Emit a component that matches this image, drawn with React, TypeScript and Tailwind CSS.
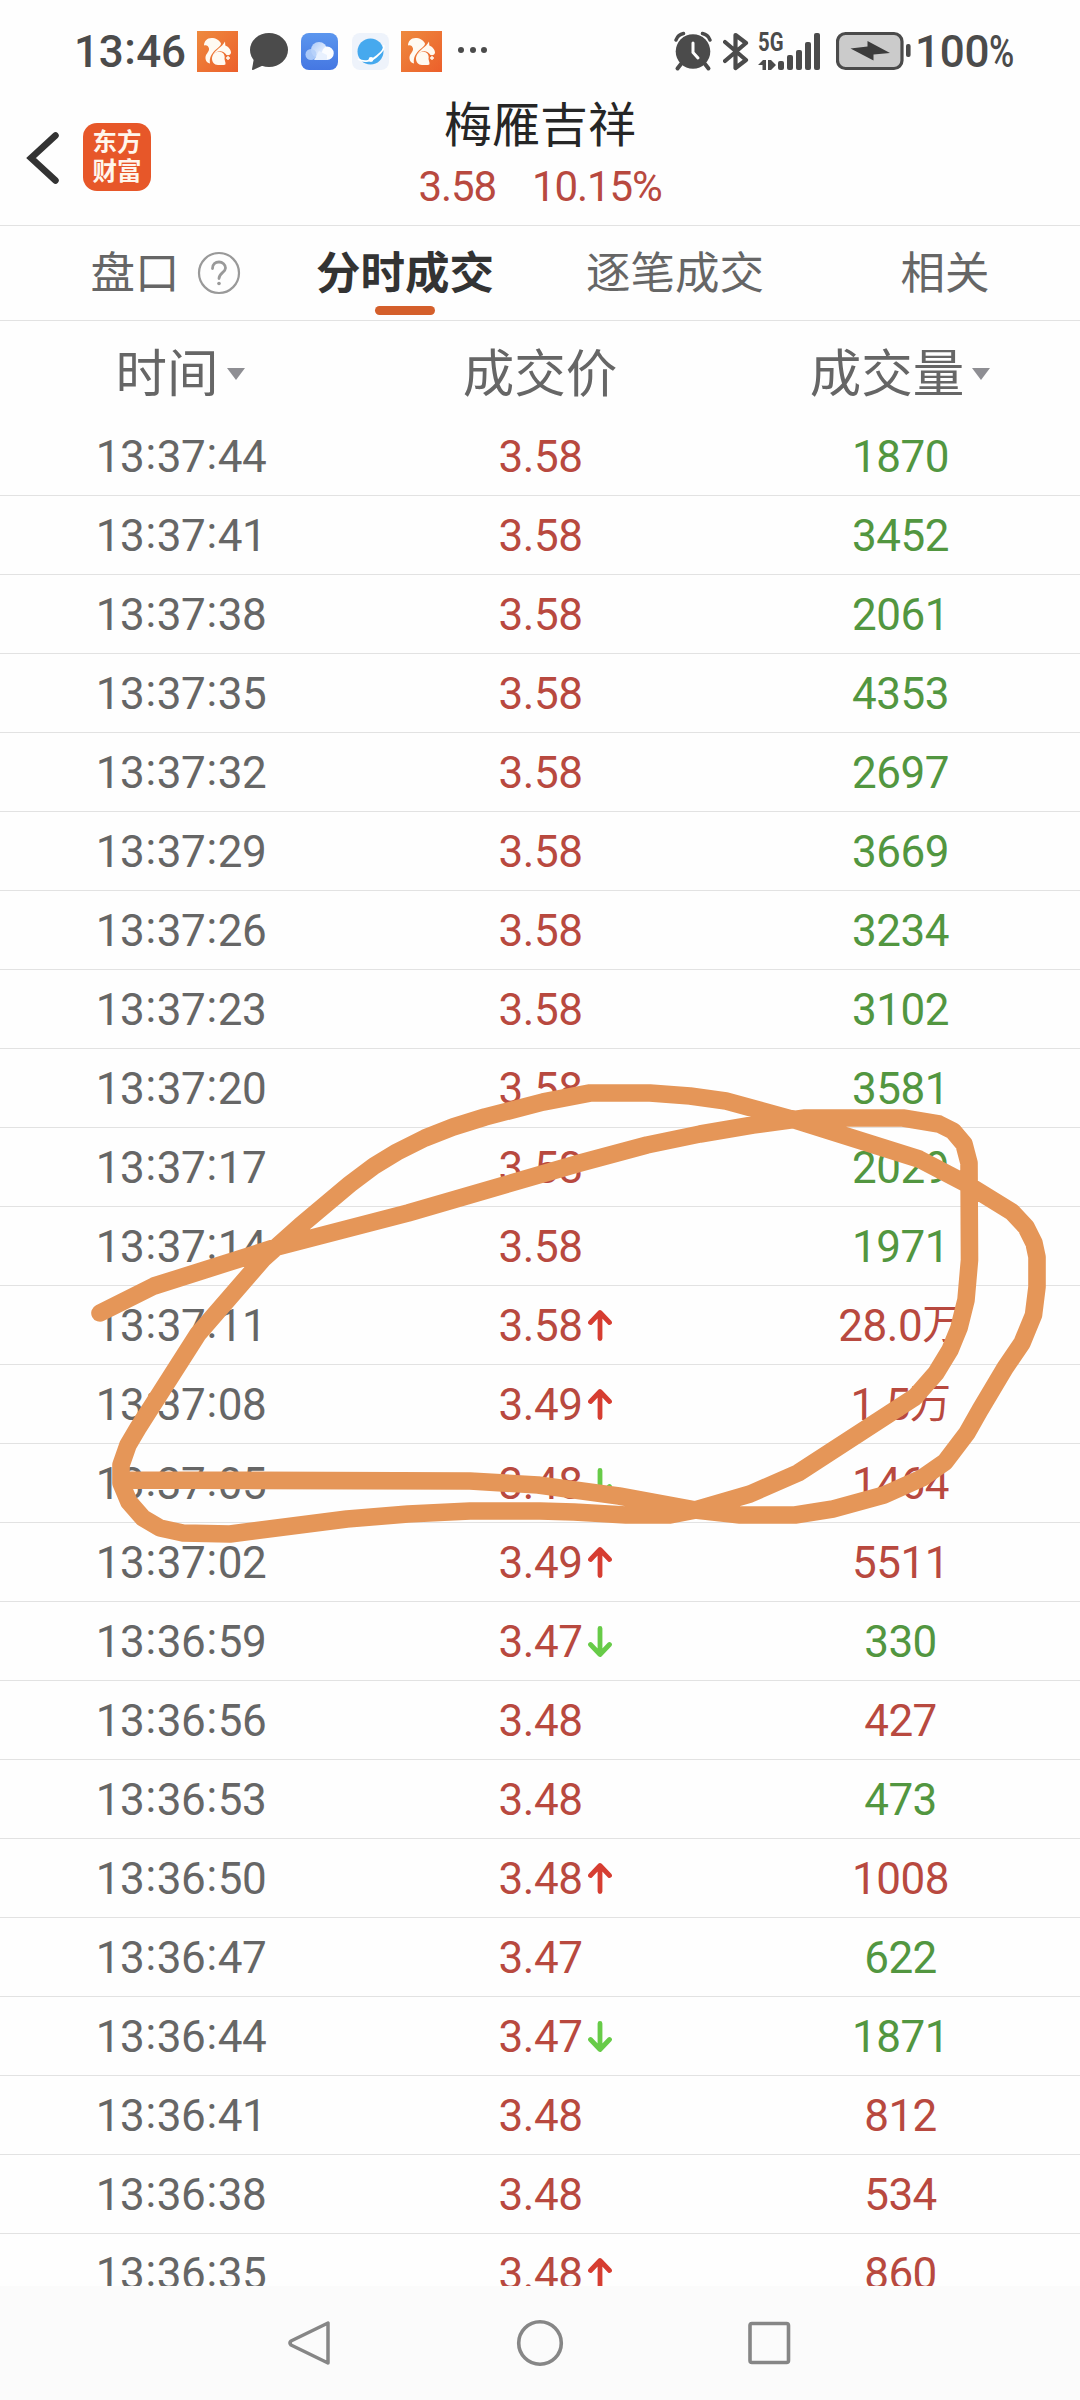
import React from "react";

type Trade = {
  time: string;
  price: string;
  volume: string;
  side: "buy" | "sell";
  move?: "up" | "down";
};

const trades: Trade[] = [
  { time: "13:37:44", price: "3.58", volume: "1870", side: "sell" },
  { time: "13:37:41", price: "3.58", volume: "3452", side: "sell" },
  { time: "13:37:38", price: "3.58", volume: "2061", side: "sell" },
  { time: "13:37:35", price: "3.58", volume: "4353", side: "sell" },
  { time: "13:37:32", price: "3.58", volume: "2697", side: "sell" },
  { time: "13:37:29", price: "3.58", volume: "3669", side: "sell" },
  { time: "13:37:26", price: "3.58", volume: "3234", side: "sell" },
  { time: "13:37:23", price: "3.58", volume: "3102", side: "sell" },
  { time: "13:37:20", price: "3.58", volume: "3581", side: "sell" },
  { time: "13:37:17", price: "3.58", volume: "2029", side: "sell" },
  { time: "13:37:14", price: "3.58", volume: "1971", side: "sell" },
  { time: "13:37:11", price: "3.58", volume: "28.0万", side: "buy", move: "up" },
  { time: "13:37:08", price: "3.49", volume: "1.5万", side: "buy", move: "up" },
  { time: "13:37:05", price: "3.48", volume: "1464", side: "buy", move: "down" },
  { time: "13:37:02", price: "3.49", volume: "5511", side: "buy", move: "up" },
  { time: "13:36:59", price: "3.47", volume: "330", side: "sell", move: "down" },
  { time: "13:36:56", price: "3.48", volume: "427", side: "buy" },
  { time: "13:36:53", price: "3.48", volume: "473", side: "sell" },
  { time: "13:36:50", price: "3.48", volume: "1008", side: "buy", move: "up" },
  { time: "13:36:47", price: "3.47", volume: "622", side: "sell" },
  { time: "13:36:44", price: "3.47", volume: "1871", side: "sell", move: "down" },
  { time: "13:36:41", price: "3.48", volume: "812", side: "buy" },
  { time: "13:36:38", price: "3.48", volume: "534", side: "buy" },
  { time: "13:36:35", price: "3.48", volume: "860", side: "buy", move: "up" },
];

// finger-drawn marker, one continuous stroke
const stroke =
  "100,1313 154,1286 277,1247 408,1213 580,1163 647,1145 700,1134 753,1125 805,1118 903,1118 939,1124 953,1131 964,1144 969,1163 969.5,1260 966,1300 959,1328 950,1350 936,1373 915,1397 798,1473 750,1494 695,1510 669,1515 626,1515 574,1512 540,1511 470,1511 408,1514 347,1519 230,1534 183,1533 160,1528 143,1518 129,1502 121,1483 121,1465 128,1445 138,1428 198,1334 263,1259 300,1226 350,1184 374,1166 397,1152 425,1138 453,1127 485,1117 543,1102 590,1093 650,1093 690,1096 726,1101 795,1120 919,1159 965,1183 1012,1212 1026,1227 1034,1243 1037,1257 1037,1287 1033.5,1315 1022,1343 1005,1368 980,1410 967,1433 945,1462 922,1478 884,1495 833,1509 795,1515 740,1515 695,1510 619,1496 538,1485 470,1481 127,1480";

function UcIcon() {
  return (
    <svg width="41" height="41" viewBox="0 0 41 41">
      <defs>
        <linearGradient id="uc" x1="0" y1="0" x2="1" y2="1">
          <stop offset="0" stopColor="#ee8a3e" />
          <stop offset="1" stopColor="#ec5f2b" />
        </linearGradient>
      </defs>
      <rect width="41" height="41" fill="url(#uc)" />
      {/* tail */}
      <path
        fill="#fffaf2"
        d="M14.500 7C10 7 7 10.500 7 14.500C9 13.500 11.500 14.500 12 17.500C12.500 21 8 23 8.500 27.500C9 31 11 32 13 32.500C12 26.500 15 22 19 18.500C22 16 24 14.500 24 12.500C22.500 9 18.500 7 14.500 7Z"
      />
      {/* head */}
      <path
        fill="#fffaf2"
        d="M28 10.500L28.300 14.500C31 15.500 34 18.500 34 21.500C34 23.500 32 24.500 29.500 24C26.500 18.500 19 19 15.500 25C18 18.500 25 16.500 28 10.500Z"
      />
      <path fill="#fffaf2" d="M22 20.800C26 20.800 28.500 24 27.500 28L28.500 32Q29 34 27 34H21C17 34 15 31 15 27.500C15 24 18 20.800 22 20.800Z" />
      <path d="M31 25V29M29 27H33" stroke="#fffaf2" strokeWidth="1.400" />
    </svg>
  );
}

function StatusBar() {
  return (
    <div className="flex h-[100px] items-start pt-[31px] font-medium text-[#4b4b4b]">
      <div className="ml-[74px] flex h-[41px] w-[123px] items-center text-[44px] tracking-[-0.2px]">
        13<Colon />46
      </div>
      <UcIcon />
      <svg className="ml-[12px]" width="38" height="41" viewBox="0 0 38 41">
        <ellipse cx="19" cy="19" rx="19" ry="17" fill="#4b4b4b" />
        <path d="M4 27L2 38Q1.800 39.500 3.500 38.800L14 34Z" fill="#4b4b4b" />
      </svg>
      <svg className="ml-[13px] mt-[2px]" width="37" height="37" viewBox="0 0 37 37">
        <defs>
          <linearGradient id="cloudBg" x1="0" y1="0" x2="0" y2="1">
            <stop offset="0" stopColor="#5b96ee" />
            <stop offset="1" stopColor="#4577e2" />
          </linearGradient>
          <linearGradient id="cloudFg" x1="0" y1="0" x2="1" y2="1">
            <stop offset="0" stopColor="#a9c8f8" />
            <stop offset="1" stopColor="#ffffff" />
          </linearGradient>
        </defs>
        <rect width="37" height="37" rx="8" fill="url(#cloudBg)" />
        <circle cx="18" cy="17" r="8" fill="url(#cloudFg)" />
        <path d="M18 27C20 27 20 14 26 13.500A6.700 6.700 0 1 1 26 27Z" fill="#fbfdff" />
        <path d="M13 27H26V22L18 18Z" fill="#e8f1fe" />
        <circle cx="10" cy="21.500" r="5.500" fill="#b4cff9" fillOpacity="0.9" />
      </svg>
      <svg className="ml-[14px] mt-[2px]" width="37" height="37" viewBox="0 0 37 37">
        <rect width="37" height="37" rx="8" fill="#eef3fb" />
        <circle cx="18.500" cy="18.500" r="13" fill="#46a9ee" />
        <path d="M6 26C12 30 20 28 25 23C30 19 33 15 31.500 12" fill="none" stroke="#fff" strokeWidth="1.800" />
        <circle cx="19" cy="26.500" r="2.400" fill="#fff" />
      </svg>
      <div className="ml-[12px]">
        <UcIcon />
      </div>
      <div className="ml-[16px] mt-[16px] flex gap-[5.500px]">
        <i className="size-[6px] rounded-full bg-[#4b4b4b]" />
        <i className="size-[6px] rounded-full bg-[#4b4b4b]" />
        <i className="size-[6px] rounded-full bg-[#4b4b4b]" />
      </div>

      <svg className="ml-auto" width="38" height="41" viewBox="0 0 38 41">
        <circle cx="19" cy="20.500" r="17.300" fill="#4b4b4b" />
        <path d="M7 33L3.500 37.500M31 33L34.500 37.500" stroke="#4b4b4b" strokeWidth="4" strokeLinecap="round" />
        <path d="M2 9Q4 3.500 9.500 2.500M36 9Q34 3.500 28.500 2.500" fill="none" stroke="#4b4b4b" strokeWidth="3.500" strokeLinecap="round" />
        <path d="M19 12V21.500L24 27" fill="none" stroke="#fff" strokeWidth="3" strokeLinecap="round" />
      </svg>
      <svg className="ml-[11px]" width="27" height="41" viewBox="0 0 27 41">
        <path
          d="M2 11L23 29L12.500 37V4L23 12L2 30"
          fill="none"
          stroke="#4b4b4b"
          strokeWidth="4.200"
          strokeLinecap="round"
          strokeLinejoin="round"
        />
      </svg>
      <div className="ml-[8px] flex h-[39px] w-[64px] items-end">
        <div className="flex h-[39px] w-[20px] shrink-0 flex-col justify-between">
          <span className="mt-[-1px] origin-left scale-x-[0.78] text-[26px] leading-[24px] font-bold">5G</span>
          <svg width="18" height="10" viewBox="0 0 18 10">
            <path d="M0 5L5 0H8V10H4.500V5ZM10 0H13V0L18 5L13 10H10Z" fill="#4b4b4b" />
          </svg>
        </div>
        <div className="flex items-end gap-[3.500px]">
          <i className="h-[9px] w-[5.500px] rounded-[2px] bg-[#4b4b4b]" />
          <i className="h-[15px] w-[5.500px] rounded-[2px] bg-[#4b4b4b]" />
          <i className="h-[20px] w-[5.500px] rounded-[2px] bg-[#4b4b4b]" />
          <i className="h-[28px] w-[5.500px] rounded-[2px] bg-[#4b4b4b]" />
          <i className="h-[37px] w-[5.500px] rounded-[2px] bg-[#4b4b4b]" />
        </div>
      </div>
      <svg className="ml-[14px]" width="75" height="41" viewBox="0 0 75 41">
        <rect x="1.500" y="2.500" width="64.500" height="35" rx="8" fill="#cbcbcb" stroke="#4b4b4b" strokeWidth="3.200" />
        <rect x="70" y="13" width="4.600" height="13" rx="2" fill="#4b4b4b" />
        <path d="M14.500 17.500L31.500 15.500V10L54 22L37.500 23.500V29.500Z" fill="#3c3c3c" />
      </svg>
      <div className="mr-[66px] ml-[4px] flex h-[41px] w-[99px] items-center text-[44px] tracking-[-0.3px]">
        100<span className="inline-block w-[26px] origin-left scale-x-[0.78]">%</span>
      </div>
    </div>
  );
}

function Colon() {
  return <span className="inline-block w-[12.600px] -translate-y-[3px] text-center">:</span>;
}

function Header() {
  return (
    <div className="grid h-[126px] grid-cols-[270px_540px_270px] border-b border-[#e2e2e2]">
      <div className="flex items-start pt-[23px] pl-[26px]">
        <svg className="mt-[6px]" width="34" height="58" viewBox="0 0 34 58">
          <path d="M29.500 6.500L5 29L29.500 51.500" fill="none" stroke="#333" strokeWidth="6.500" strokeLinecap="round" strokeLinejoin="miter" />
        </svg>
        <div className="ml-[23px] flex size-[68px] flex-col items-center justify-center rounded-[14px] bg-[#e75729] text-[24.500px] leading-[29px] font-bold text-[#fff6ec]">
          <span>东方</span>
          <span>财富</span>
        </div>
      </div>
      <div className="flex flex-col items-center">
        <div className="pt-px text-[48px] leading-[50px] text-[#262626]">梅雁吉祥</div>
        <div className="mt-[11px] flex gap-[36px] text-[42px] leading-[50px] tracking-[-1.1px] text-[#b8493f]">
          <span>3.58</span>
          <span>10.15%</span>
        </div>
      </div>
      <div />
    </div>
  );
}

function Tabs() {
  return (
    <div className="grid h-[95px] grid-cols-4 border-b border-[#e2e2e2] text-[44.500px] leading-[97px] text-[#666]">
      <div className="relative text-center">
        盘口
        <svg className="absolute top-[25px] left-[197px]" width="44" height="44" viewBox="0 0 44 44" fill="none" stroke="#999">
          <circle cx="22" cy="22" r="20" strokeWidth="2.200" />
          <path d="M15.500 17.500C15.500 13 18.500 11 22 11C25.500 11 28.500 13.500 28.500 17C28.500 21.500 22 22 22 27.500" strokeWidth="2.800" strokeLinecap="round" />
          <circle cx="22" cy="32.500" r="1.800" fill="#999" stroke="none" />
        </svg>
      </div>
      <div className="relative text-center font-bold text-[#333]">
        分时成交
        <div className="absolute top-[80px] left-[105px] h-[9px] w-[60px] rounded-full bg-[#d45f2b]" />
      </div>
      <div className="text-center">逐笔成交</div>
      <div className="text-center">相关</div>
    </div>
  );
}

function Caret() {
  return (
    <svg className="-mt-[3px] ml-[8px]" width="18" height="12" viewBox="0 0 18 12">
      <path d="M0 0H18L9 12Z" fill="#8e8e93" />
    </svg>
  );
}

function MoveArrow({ move }: { move: "up" | "down" }) {
  return (
    <svg
      className={move === "up" ? "absolute top-[23px] left-[228px]" : "absolute top-[23px] left-[228px] rotate-180"}
      width="24"
      height="33"
      viewBox="0 0 24 33"
    >
      <path
        d="M12 29.500V4M2.500 13.500L12 3.500L21.500 13.500"
        fill="none"
        stroke={move === "up" ? "#d63d31" : "#67cb48"}
        strokeWidth="4.800"
        strokeLinecap="round"
        strokeLinejoin="round"
      />
    </svg>
  );
}

function Row({ trade }: { trade: Trade }) {
  const [h, m, s] = trade.time.split(":");
  return (
    <div className="grid h-[79px] shrink-0 grid-cols-3 border-t border-[#e2e2e2] text-center text-[44px] leading-[80px] tracking-[-0.5px] first:border-transparent">
      <div className="pl-[2px] text-[#666]">
        {h}
        <Colon />
        {m}
        <Colon />
        {s}
      </div>
      <div className="relative pl-px text-[#b8493f]">
        {trade.price}
        {trade.move && <MoveArrow move={trade.move} />}
      </div>
      <div className={trade.side === "buy" ? "pl-px text-[#b8493f]" : "pl-px text-[#529640]"}>
        {trade.volume.replace("万", "")}
        {trade.volume.includes("万") && (
          <span className="inline-block -translate-y-[2px] text-[41px] leading-none">万</span>
        )}
      </div>
    </div>
  );
}

export default function App() {
  return (
    <div className="relative flex h-[2400px] w-[1080px] flex-col overflow-hidden bg-[#fefefe] font-[Roboto,'Noto_Sans_CJK_SC',sans-serif]">
      <StatusBar />
      <Header />
      <Tabs />
      <div className="grid h-[95px] shrink-0 grid-cols-3 text-[51.500px] text-[#666]">
        <div className="flex items-center justify-center pt-[13px]">
          时间
          <Caret />
        </div>
        <div className="flex items-center justify-center pt-[13px]">成交价</div>
        <div className="flex items-center justify-center pt-[13px]">
          成交量
          <Caret />
        </div>
      </div>
      <div className="flex min-h-0 flex-1 flex-col overflow-hidden">
        {trades.map((t) => (
          <Row key={t.time} trade={t} />
        ))}
      </div>

      {/* Android nav bar */}
      <div className="flex h-[114px] shrink-0 justify-center gap-[182px] bg-[#fbfbfb] pt-[32px]">
        <svg width="48" height="50" viewBox="0 0 48 50">
          <path d="M42 5V45L5 27Q3 25 5 23Z" fill="none" stroke="#868686" strokeWidth="3.500" strokeLinejoin="round" />
        </svg>
        <svg width="48" height="50" viewBox="0 0 48 50">
          <circle cx="24" cy="25" r="21.300" fill="none" stroke="#868686" strokeWidth="3.600" />
        </svg>
        <svg width="48" height="50" viewBox="0 0 48 50">
          <rect x="4" y="5.500" width="38.500" height="39" rx="2" fill="none" stroke="#868686" strokeWidth="3.600" />
        </svg>
      </div>

      <svg className="pointer-events-none absolute top-0 left-0" width="1080" height="2400" viewBox="0 0 1080 2400">
        <polyline points={stroke} fill="none" stroke="#e59658" strokeWidth="17.600" strokeLinecap="round" strokeLinejoin="round" />
      </svg>
    </div>
  );
}
